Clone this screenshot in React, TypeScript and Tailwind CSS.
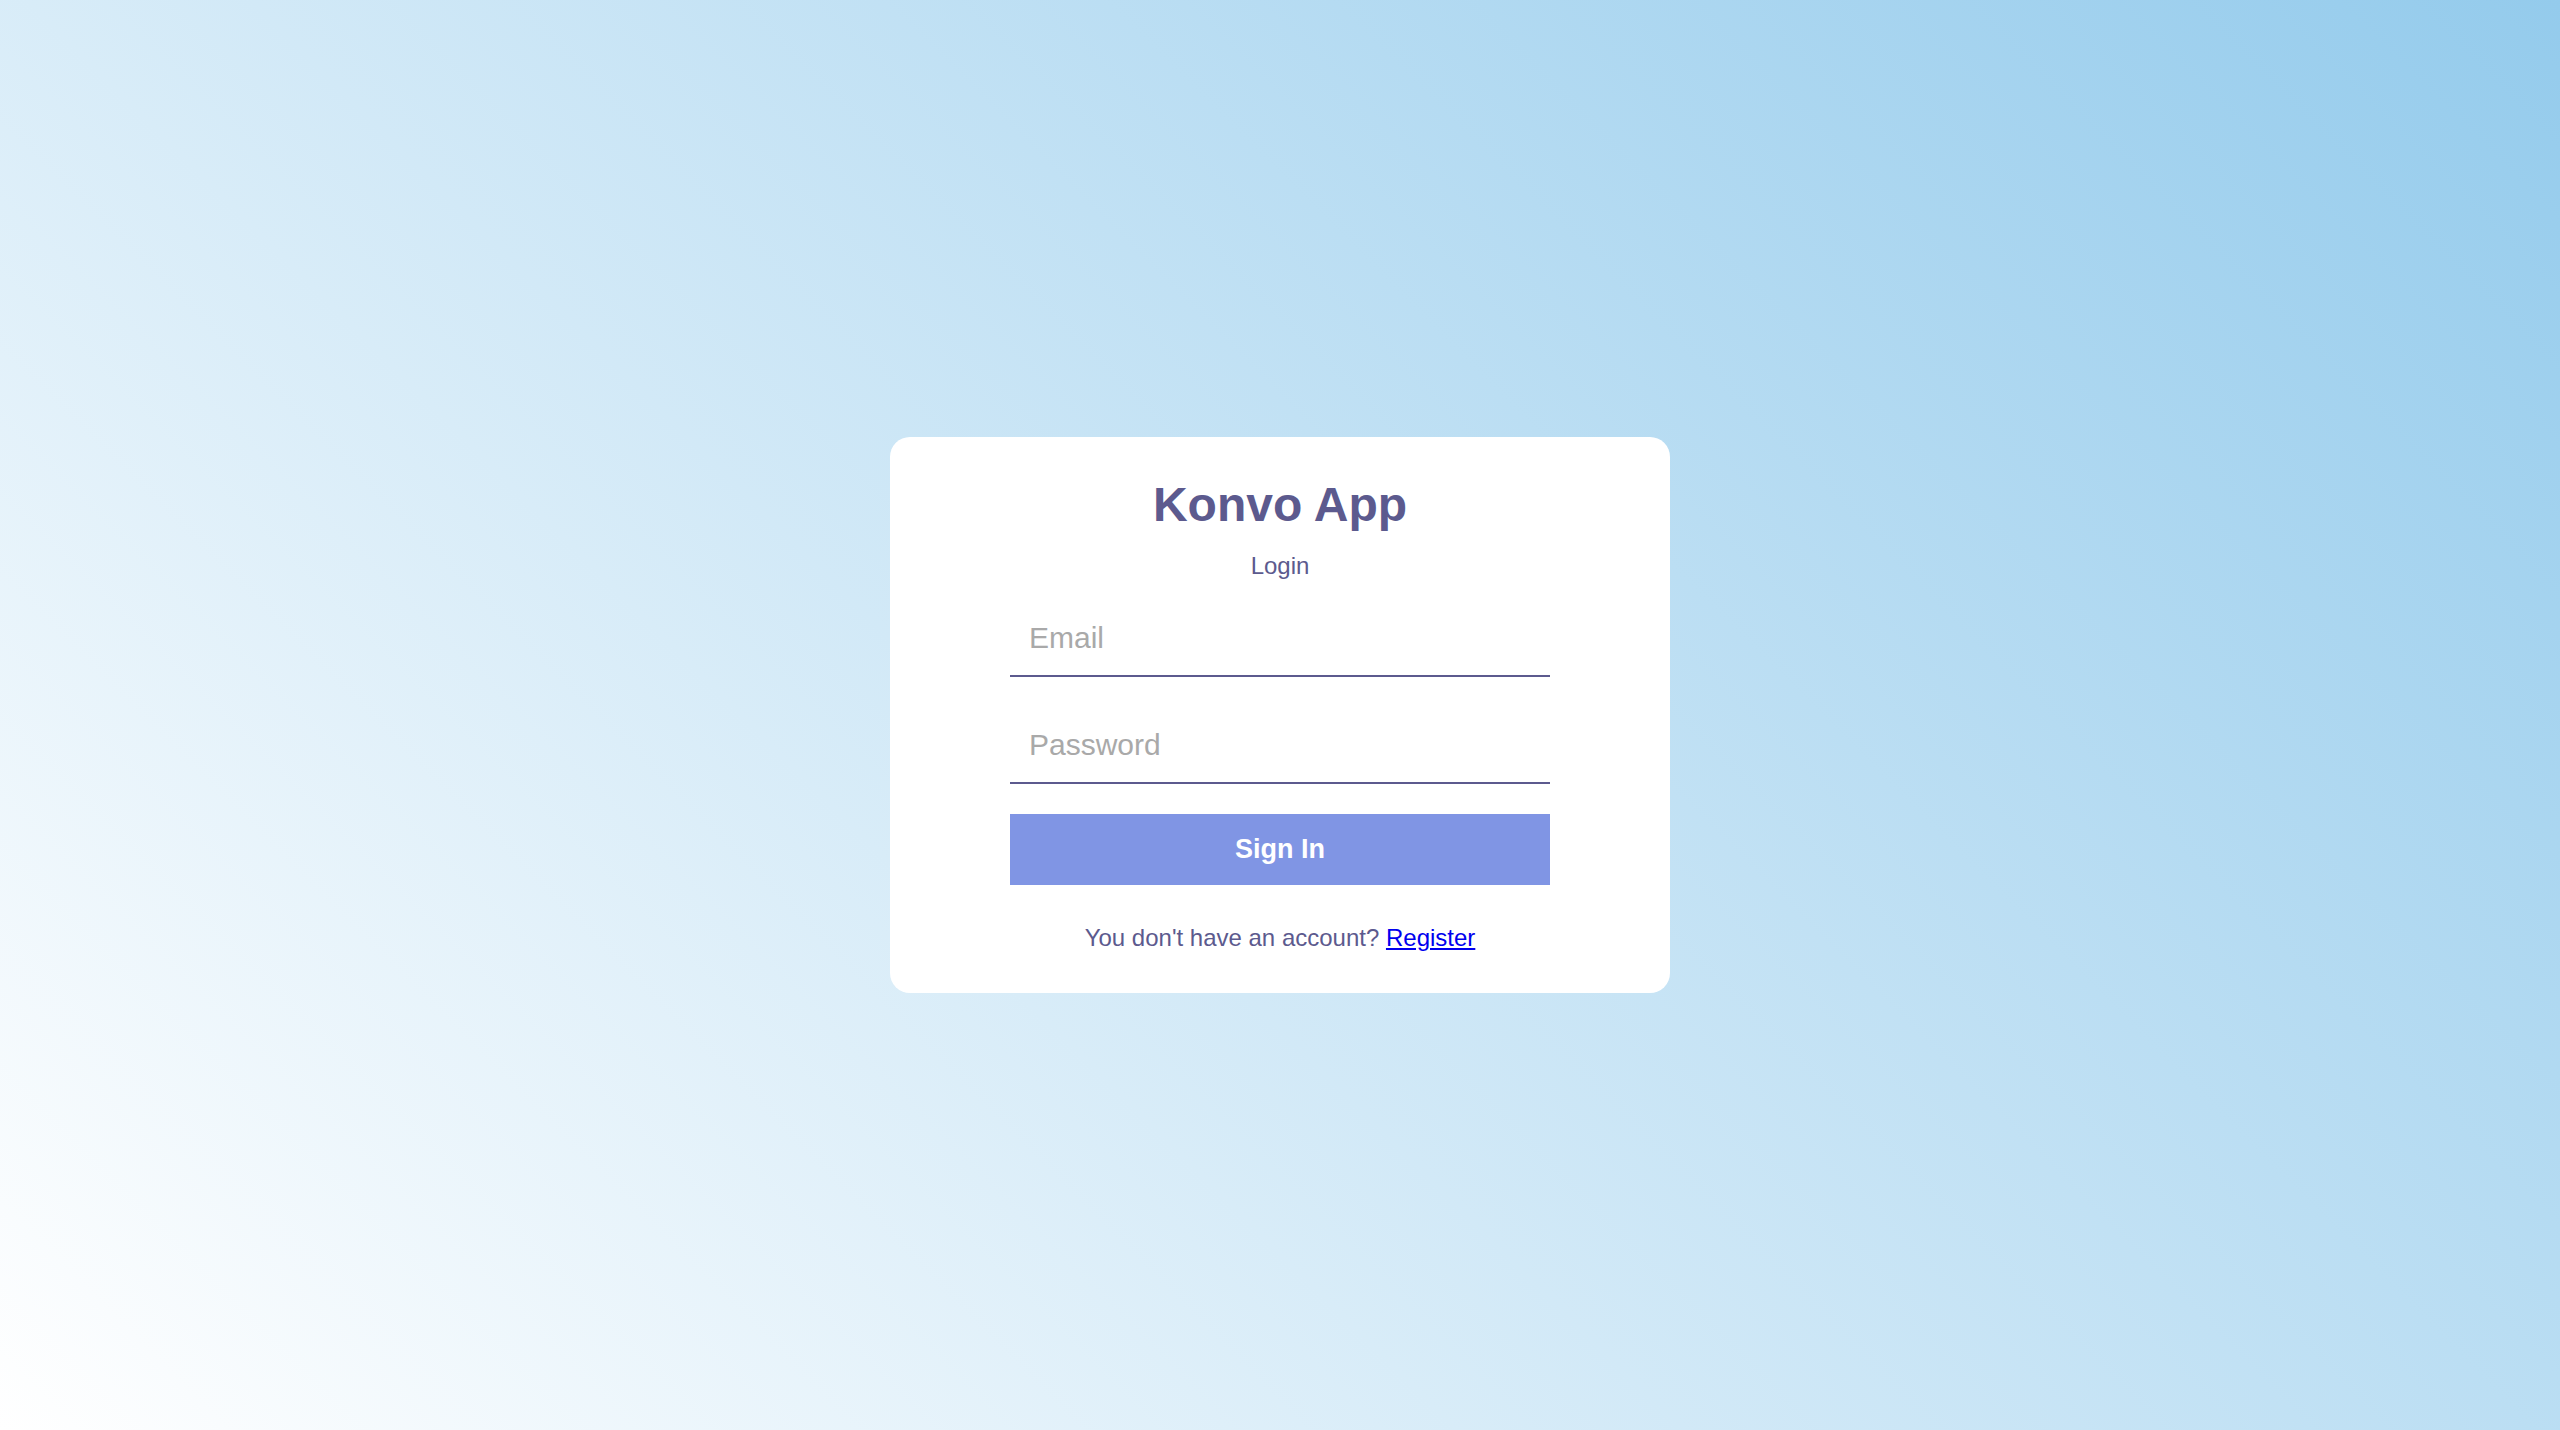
import React, { useState } from "react";

export default function App() {
  const [email, setEmail] = useState("");
  const [password, setPassword] = useState("");

  return (
    <div className="flex h-[1430px] w-full items-center justify-center bg-[linear-gradient(45deg,#ffffff,#94cbec)] font-['Liberation_Sans',Arial,sans-serif]">
      {/* login card */}
      <div className="flex w-[780px] flex-col items-center rounded-[20px] bg-white pt-[40px] pb-[41px]">
        <h1 className="text-[48px] leading-[56px] font-bold text-[#5c5a8e]">Konvo App</h1>
        <p className="mt-[19px] text-[24px] leading-[28px] text-[#5c5a8e]">Login</p>

        <form className="mt-[20px] flex w-[540px] flex-col" onSubmit={(e) => e.preventDefault()}>
          <input
            type="email"
            placeholder="Email"
            value={email}
            onChange={(e) => setEmail(e.target.value)}
            className="h-[77px] w-full border-b-2 border-[#5c5a8e] bg-transparent px-[19px] text-[30px] text-[#333] outline-none placeholder:text-[#a9a9a9]"
          />
          <input
            type="password"
            placeholder="Password"
            value={password}
            onChange={(e) => setPassword(e.target.value)}
            className="mt-[30px] h-[77px] w-full border-b-2 border-[#5c5a8e] bg-transparent px-[19px] text-[30px] text-[#333] outline-none placeholder:text-[#a9a9a9]"
          />
          <button
            type="submit"
            className="mt-[30px] h-[71px] w-full cursor-pointer bg-[#8095e4] text-[27px] font-bold text-white"
          >
            Sign In
          </button>
        </form>

        <p className="mt-[39px] text-[24px] leading-[28px] text-[#5c5a8e]">
          You don't have an account?{" "}
          <a href="#" className="text-[#0000ee] underline">
            Register
          </a>
        </p>
      </div>
    </div>
  );
}
